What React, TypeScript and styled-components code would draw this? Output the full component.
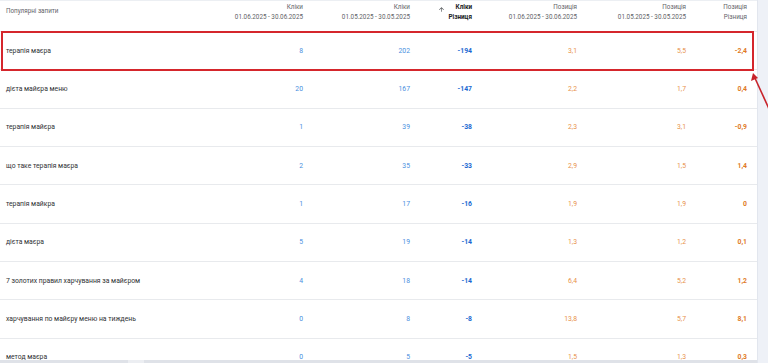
import React from "react";
import styled, { createGlobalStyle } from "styled-components";

const GlobalStyle = createGlobalStyle`
  html, body {
    margin: 0;
    padding: 0;
    background: #ffffff;
    font-family: Roboto, "Liberation Sans", Arial, sans-serif;
  }
`;

type Row = {
  query: string;
  clicksNow: number;
  clicksPrev: number;
  clicksDiff: number;
  posNow: string;
  posPrev: string;
  posDiff: string;
};

const rows: Row[] = [
  { query: "терапія маєра", clicksNow: 8, clicksPrev: 202, clicksDiff: -194, posNow: "3,1", posPrev: "5,5", posDiff: "-2,4" },
  { query: "дієта майєра меню", clicksNow: 20, clicksPrev: 167, clicksDiff: -147, posNow: "2,2", posPrev: "1,7", posDiff: "0,4" },
  { query: "терапія майєра", clicksNow: 1, clicksPrev: 39, clicksDiff: -38, posNow: "2,3", posPrev: "3,1", posDiff: "-0,9" },
  { query: "що таке терапія маєра", clicksNow: 2, clicksPrev: 35, clicksDiff: -33, posNow: "2,9", posPrev: "1,5", posDiff: "1,4" },
  { query: "терапія майкра", clicksNow: 1, clicksPrev: 17, clicksDiff: -16, posNow: "1,9", posPrev: "1,9", posDiff: "0" },
  { query: "дієта маєра", clicksNow: 5, clicksPrev: 19, clicksDiff: -14, posNow: "1,3", posPrev: "1,2", posDiff: "0,1" },
  { query: "7 золотих правил харчування за майєром", clicksNow: 4, clicksPrev: 18, clicksDiff: -14, posNow: "6,4", posPrev: "5,2", posDiff: "1,2" },
  { query: "харчування по майєру меню на тиждень", clicksNow: 0, clicksPrev: 8, clicksDiff: -8, posNow: "13,8", posPrev: "5,7", posDiff: "8,1" },
  { query: "метод маєра", clicksNow: 0, clicksPrev: 5, clicksDiff: -5, posNow: "1,5", posPrev: "1,3", posDiff: "0,3" },
];

const COLUMNS = "230px 73px 107px 62px 105px 109px 61px 10px";

const Page = styled.div`
  position: relative;
  display: flex;
  width: 768px;
  height: 363px;
  overflow: hidden;
`;

const Main = styled.div`
  display: flex;
  flex-direction: column;
  width: 757px;
  height: 100%;
`;

const Gutter = styled.div`
  flex: 1;
  background: #eef1f7;
  border-left: 1px solid #e2e6ee;
`;

const Table = styled.div`
  position: relative;
  flex: 1;
  overflow: hidden;
  border-top: 1px solid #eceff3;
`;

const HScroll = styled.div`
  height: 3px;
  display: flex;
  background: #dfe2e8;
`;

const ScrollGap = styled.div`
  margin-left: 128px;
  width: 16px;
  background: #eceef2;
`;

const HeaderRow = styled.div`
  display: grid;
  grid-template-columns: ${COLUMNS};
  height: 30px;
  box-sizing: border-box;
`;

const HeadCell = styled.div<{ $left?: boolean; $active?: boolean }>`
  display: flex;
  flex-direction: column;
  align-items: ${({ $left }) => ($left ? "flex-start" : "flex-end")};
  justify-content: ${({ $left }) => ($left ? "center" : "flex-start")};
  padding: ${({ $left }) => ($left ? "0 0 10px 6px" : "1px 0 0 0")};
  font-size: 6.3px;
  line-height: 10px;
  color: ${({ $active }) => ($active ? "#202124" : "#5f6368")};
  font-weight: ${({ $active }) => ($active ? 700 : 400)};
  white-space: nowrap;
  position: relative;
`;

const SortIcon = styled.svg`
  position: absolute;
  left: 28px;
  top: 5px;
  width: 7px;
  height: 7px;
  fill: #3c4043;
`;

const BodyRow = styled.div`
  display: grid;
  grid-template-columns: ${COLUMNS};
  height: 38.33px;
  box-sizing: border-box;
  border-top: 1px solid #e8eaed;
  align-items: center;
`;

const QueryCell = styled.div`
  padding-left: 6px;
  font-size: 6.8px;
  color: #303134;
  white-space: nowrap;
`;

const NumCell = styled.div<{ $tone: "blue" | "orange"; $bold?: boolean }>`
  text-align: right;
  font-size: 6.8px;
  white-space: nowrap;
  font-weight: ${({ $bold }) => ($bold ? 700 : 400)};
  color: ${({ $tone, $bold }) =>
    $tone === "blue" ? ($bold ? "#1a68d1" : "#4a8fe0") : $bold ? "#e07a1f" : "#e8914a"};
`;

const Highlight = styled.div`
  position: absolute;
  left: 1px;
  top: 30px;
  width: 753px;
  height: 40px;
  box-sizing: border-box;
  border: 2px solid #d5262c;
  pointer-events: none;
`;

const Pointer = styled.svg`
  position: absolute;
  left: 740px;
  top: 67px;
  width: 28px;
  height: 50px;
  overflow: visible;
`;

const App: React.FC = () => {
  return (
    <>
      <GlobalStyle />
      <Page>
        <Main>
          <Table>
            <HeaderRow>
              <HeadCell $left>Популярні запити</HeadCell>
              <HeadCell>
                <span>Кліки</span>
                <span>01.06.2025 - 30.06.2025</span>
              </HeadCell>
              <HeadCell>
                <span>Кліки</span>
                <span>01.05.2025 - 30.05.2025</span>
              </HeadCell>
              <HeadCell $active>
                <SortIcon viewBox="0 0 24 24">
                  <path d="M4 12l1.41 1.41L11 7.83V20h2V7.83l5.58 5.59L20 12l-8-8-8 8z" />
                </SortIcon>
                <span>Кліки</span>
                <span>Різниця</span>
              </HeadCell>
              <HeadCell>
                <span>Позиція</span>
                <span>01.06.2025 - 30.06.2025</span>
              </HeadCell>
              <HeadCell>
                <span>Позиція</span>
                <span>01.05.2025 - 30.05.2025</span>
              </HeadCell>
              <HeadCell>
                <span>Позиція</span>
                <span>Різниця</span>
              </HeadCell>
              <div />
            </HeaderRow>
            {rows.map((row) => (
              <BodyRow key={row.query}>
                <QueryCell>{row.query}</QueryCell>
                <NumCell $tone="blue">{row.clicksNow}</NumCell>
                <NumCell $tone="blue">{row.clicksPrev}</NumCell>
                <NumCell $tone="blue" $bold>{row.clicksDiff}</NumCell>
                <NumCell $tone="orange">{row.posNow}</NumCell>
                <NumCell $tone="orange">{row.posPrev}</NumCell>
                <NumCell $tone="orange" $bold>{row.posDiff}</NumCell>
                <div />
              </BodyRow>
            ))}
            <Highlight />
          </Table>
          <HScroll>
            <ScrollGap />
          </HScroll>
        </Main>
        <Gutter />
        <Pointer viewBox="0 0 28 50">
          <line x1="30" y1="44" x2="14" y2="9" stroke="#c8232a" strokeWidth="1.6" />
          <polygon points="13,6 11,14 18,11" fill="#c8232a" />
        </Pointer>
      </Page>
    </>
  );
};

export default App;
